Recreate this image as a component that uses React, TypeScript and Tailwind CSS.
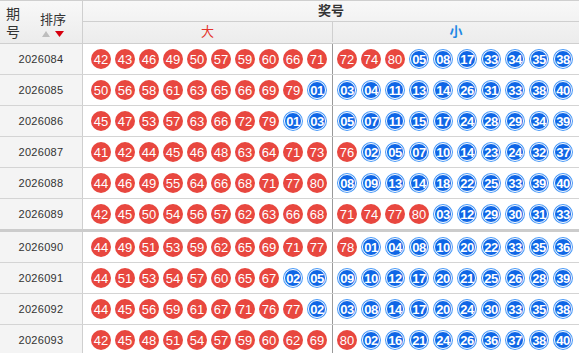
import React from 'react'

type Row = { issue: string; big: number[]; small: number[] }

const ROWS: Row[] = [
  { issue: '2026084', big: [42, 43, 46, 49, 50, 57, 59, 60, 66, 71], small: [72, 74, 80, 5, 8, 17, 33, 34, 35, 38] },
  { issue: '2026085', big: [50, 56, 58, 61, 63, 65, 66, 69, 79, 1], small: [3, 4, 11, 13, 14, 26, 31, 33, 38, 40] },
  { issue: '2026086', big: [45, 47, 53, 57, 63, 66, 72, 79, 1, 3], small: [5, 7, 11, 15, 17, 24, 28, 29, 34, 39] },
  { issue: '2026087', big: [41, 42, 44, 45, 46, 48, 63, 64, 71, 73], small: [76, 2, 5, 7, 10, 14, 23, 24, 32, 37] },
  { issue: '2026088', big: [44, 46, 49, 55, 64, 66, 68, 71, 77, 80], small: [8, 9, 13, 14, 18, 22, 25, 33, 39, 40] },
  { issue: '2026089', big: [42, 45, 50, 54, 56, 57, 62, 63, 66, 68], small: [71, 74, 77, 80, 3, 12, 29, 30, 31, 33] },
  { issue: '2026090', big: [44, 49, 51, 53, 59, 62, 65, 69, 71, 77], small: [78, 1, 4, 8, 10, 20, 22, 33, 35, 36] },
  { issue: '2026091', big: [44, 51, 53, 54, 57, 60, 65, 67, 2, 5], small: [9, 10, 12, 17, 20, 21, 25, 26, 28, 39] },
  { issue: '2026092', big: [44, 45, 56, 59, 61, 67, 71, 76, 77, 2], small: [3, 8, 14, 17, 20, 24, 30, 33, 35, 38] },
  { issue: '2026093', big: [42, 45, 48, 51, 54, 57, 59, 60, 62, 69], small: [80, 2, 16, 21, 24, 26, 36, 37, 38, 40] },
]

const pad = (n: number) => String(n).padStart(2, '0')

function Ball({ n }: { n: number }) {
  if (n > 40) {
    return (
      <span className="w-[20px] h-[20px] rounded-full bg-[#e8473f] text-white text-[13px] leading-none flex items-center justify-center shrink-0">
        {pad(n)}
      </span>
    )
  }
  // blue ball has a white ring inside
  return (
    <span className="w-[20px] h-[20px] rounded-full bg-[#4a9af7] p-[1px] flex shrink-0">
      <span className="flex-1 rounded-full border border-white bg-[#0f66e6] text-white text-[13px] font-bold leading-none flex items-center justify-center tracking-[-0.5px]">
        {pad(n)}
      </span>
    </span>
  )
}

export default function App() {
  return (
    <div className="w-[579px] h-[353px] overflow-hidden bg-white text-[#333] font-['Liberation_Sans','Noto_Sans_CJK_SC',sans-serif]">
      <div className="border-t border-[#cfcfcf]">
        {/* Header */}
        <div className="flex bg-gradient-to-b from-[#f8f8f8] to-[#ececec] border-b border-[#cfcfcf]">
          <div className="w-[83px] h-[42px] border-r border-[#cfcfcf] flex items-center pl-[6px] gap-[20px]">
            <div className="flex flex-col text-[14px] leading-[18px] mt-[2px]">
              <span>期</span>
              <span>号</span>
            </div>
            <div className="flex flex-col items-center pt-[4px]">
              <span className="text-[13px] leading-[16px]">排序</span>
              <span className="flex gap-[5px] mt-[3px]">
                <svg width="8" height="6" viewBox="0 0 8 6"><path d="M4 0L8 6H0Z" fill="#bdbdbd" /></svg>
                <svg width="9" height="6" viewBox="0 0 9 6"><path d="M0 0H9L4.5 6Z" fill="#d6000f" /></svg>
              </span>
            </div>
          </div>
          <div className="flex-1 flex flex-col">
            <div className="h-[21px] border-b border-[#cfcfcf] flex items-center justify-center text-[13px] font-bold">
              奖号
            </div>
            <div className="h-[20px] flex">
              <div className="w-[250px] border-r border-[#cfcfcf] flex items-center justify-center text-[13px] text-[#e5322b]">大</div>
              <div className="flex-1 flex items-center justify-center text-[13px] font-bold text-[#1e88e5]">小</div>
            </div>
          </div>
        </div>

        {/* Body */}
        {ROWS.map((r, i) => (
          <div
            key={r.issue}
            className={`flex ${i === 5 ? 'border-b-[3px] border-[#cccccc]' : 'border-b border-[#d4d4d4]'}`}
          >
            <div className="w-[83px] h-[30px] border-r border-[#cfcfcf] bg-[#f4f4f4] flex items-center justify-center text-[11px] tracking-[0.3px]">
              {r.issue}
            </div>
            <div className="w-[250px] h-[30px] border-r border-[#9a9a9a] flex items-center gap-[4px] pl-[8px]">
              {r.big.map((n, k) => <Ball key={k} n={n} />)}
            </div>
            <div className="flex-1 h-[30px] flex items-center gap-[4px] pl-[4px]">
              {r.small.map((n, k) => <Ball key={k} n={n} />)}
            </div>
          </div>
        ))}
      </div>
    </div>
  )
}
